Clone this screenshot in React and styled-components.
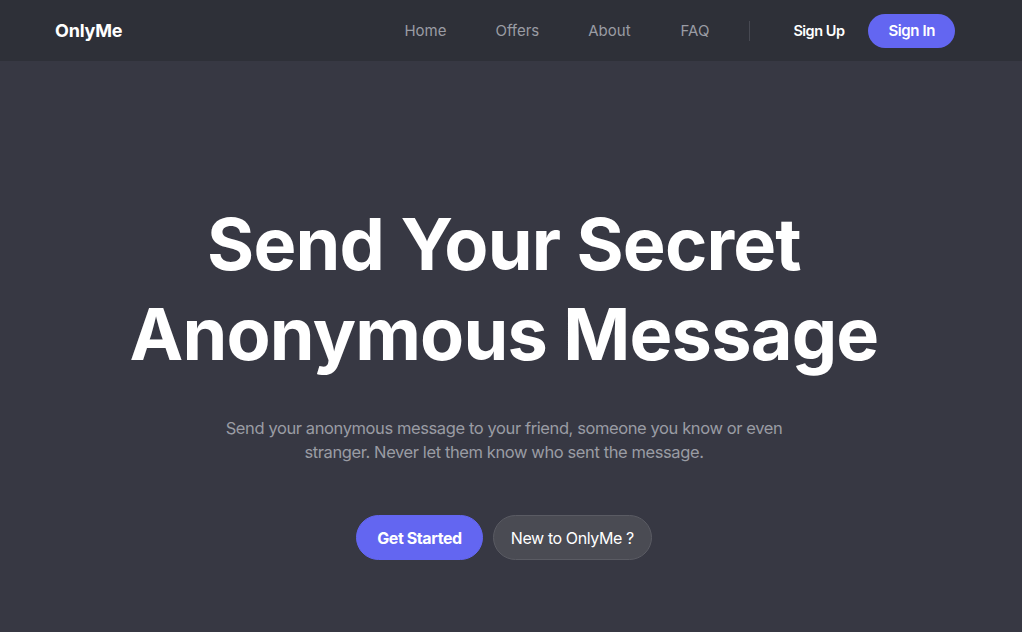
import React from 'react';
import styled, { createGlobalStyle } from 'styled-components';

const GlobalStyle = createGlobalStyle`
body {
  margin:0;
  background-color:#373843;
  font-family:Inter, "Noto Sans", sans-serif;
}
`

const Page = styled.div`
min-height:632px;
background-color:#373843;
color:white;
`

const Header = styled.header`
height:61px;
background-color:#2e3038;
display:flex;
align-items:center;
justify-content:space-between;
padding:0 67px 0 55px;
`

const Logo = styled.div`
font-size:18px;
font-weight:700;
letter-spacing:-0.2px;
`

const Nav = styled.nav`
display:flex;
align-items:center;
`

const NavLink = styled.a`
color:#9a9ca4;
font-size:15px;
text-decoration:none;
margin-right:${p => p.gap}px;
`

const Divider = styled.div`
width:1px;
height:20px;
background-color:#474952;
margin-right:43px;
`

const SignUp = styled.a`
color:white;
font-size:14.5px;
font-weight:600;
letter-spacing:-0.5px;
margin-right:24px;
`

const SignIn = styled.button`
background-color:#6366f1;
color:white;
border:none;
border-radius:17px;
height:34px;
padding:0 20px;
font-family:inherit;
font-size:15px;
font-weight:600;
letter-spacing:-0.4px;
`

const Hero = styled.main`
display:flex;
flex-direction:column;
align-items:center;
padding:138px 14px 0 0;
`

const Title = styled.h1`
margin:0;
font-size:72px;
font-weight:700;
line-height:90px;
letter-spacing:-0.8px;
text-align:center;
`

const Subtitle = styled.p`
margin:37px 0 0;
width:590px;
text-align:center;
color:#9a9ca4;
font-size:16.5px;
line-height:24px;
letter-spacing:-0.4px;
`

const Buttons = styled.div`
display:flex;
gap:10px;
margin-top:51px;
`

const Button = styled.button`
height:45px;
border-radius:23px;
padding:0 ${p => (p.primary ? 20 : 17)}px;
font-family:inherit;
font-size:16px;
letter-spacing:-0.4px;
color:white;
font-weight:${p => (p.primary ? 700 : 400)};
background-color:${p => (p.primary ? '#6366f1' : '#4a4b53')};
border:1px solid ${p => (p.primary ? '#6366f1' : '#5a5b63')};
`

const links = [
    { label: 'Home', gap: 49 },
    { label: 'Offers', gap: 49 },
    { label: 'About', gap: 50 },
    { label: 'FAQ', gap: 40 },
];

const App = () => {
    return <Page>
        <GlobalStyle />
        <Header>
            <Logo>OnlyMe</Logo>
            <Nav>
                {links.map(l => <NavLink key={l.label} gap={l.gap}>{l.label}</NavLink>)}
                <Divider />
                <SignUp>Sign Up</SignUp>
                <SignIn>Sign In</SignIn>
            </Nav>
        </Header>
        <Hero>
            <Title>Send Your Secret<br />Anonymous Message</Title>
            <Subtitle>Send your anonymous message to your friend, someone you know or even stranger. Never let them know who sent the message.</Subtitle>
            <Buttons>
                <Button primary>Get Started</Button>
                <Button>New to OnlyMe ?</Button>
            </Buttons>
        </Hero>
    </Page>;
};

export default App;
